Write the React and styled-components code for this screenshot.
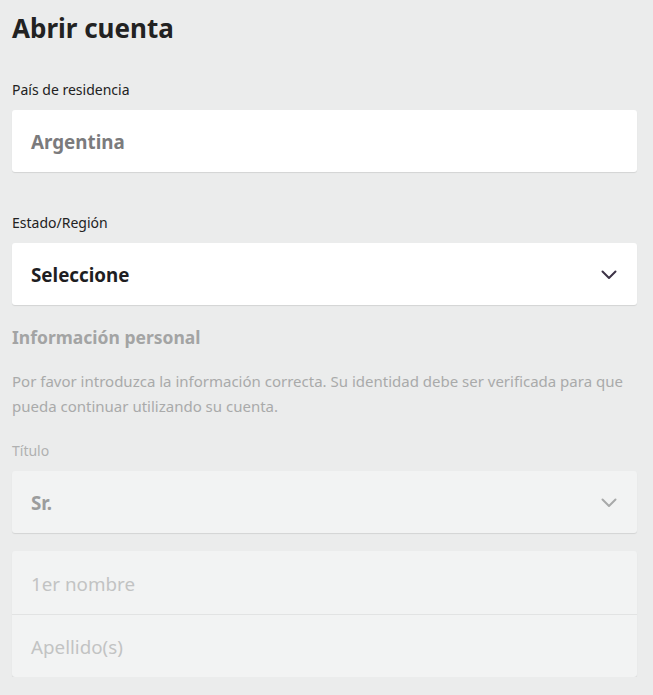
import React from "react";
import styled, { createGlobalStyle } from "styled-components";

const Global = createGlobalStyle`
  html, body { margin: 0; padding: 0; background: #ebecec; }
  body { font-family: "Noto Sans", "Open Sans", sans-serif; color: #222; }
  * { box-sizing: border-box; }
`;

const Page = styled.div`
  padding: 10px 16px 0 12px;
  display: flex;
  flex-direction: column;
`;

const Title = styled.h1`
  margin: 0;
  font-size: 26px;
  line-height: 36px;
  font-weight: 700;
  color: #222;
`;

const Field = styled.div`
  display: flex;
  flex-direction: column;
  margin-top: ${(p) => p.$mt}px;
`;

const Label = styled.div`
  font-size: 14px;
  line-height: 20px;
  color: ${(p) => (p.$muted ? "#b0b1b1" : "#222")};
  margin-bottom: 10px;
`;

const Card = styled.div`
  background: ${(p) => (p.$muted ? "#f2f3f3" : "#ffffff")};
  border-radius: 3px;
  box-shadow: 0 1px 1px rgba(0, 0, 0, 0.1);
  display: flex;
  flex-direction: column;
`;

const Row = styled.div`
  height: ${(p) => p.$h || 62}px;
  padding: 2px 20px 0 19px;
  display: flex;
  align-items: center;
  justify-content: space-between;
  & + & { border-top: 1px solid #e2e3e3; }
`;

const Value = styled.span`
  font-size: 18.8px;
  font-weight: 700;
  color: ${(p) => p.$color};
`;

const Placeholder = styled.span`
  font-size: 18.8px;
  font-weight: 400;
  color: #c2c3c3;
`;

const Section = styled.h2`
  margin: 19px 0 0;
  font-size: 17.5px;
  line-height: 26px;
  font-weight: 700;
  color: #a3a4a4;
`;

const Para = styled.p`
  margin: 19px 0 0;
  font-size: 15px;
  line-height: 25px;
  color: #a9aaaa;
`;

const Chevron = ({ color }) => (
  <svg width="16" height="10" viewBox="0 0 16 10" fill="none">
    <path d="M1.5 1.5 L8 8 L14.5 1.5" stroke={color} strokeWidth="2" strokeLinecap="round" strokeLinejoin="round" />
  </svg>
);

export default function App() {
  return (
    <>
      <Global />
      <Page>
        <Title>Abrir cuenta</Title>
        <Field $mt={34}>
          <Label>País de residencia</Label>
          <Card>
            <Row>
              <Value $color="#7b7b7d">Argentina</Value>
            </Row>
          </Card>
        </Field>
        <Field $mt={41}>
          <Label>Estado/Región</Label>
          <Card>
            <Row>
              <Value $color="#1e1e22">Seleccione</Value>
              <Chevron color="#3c3246" />
            </Row>
          </Card>
        </Field>
        <Section>Información personal</Section>
        <Para>
          Por favor introduzca la información correcta. Su identidad debe ser verificada para que
          pueda continuar utilizando su cuenta.
        </Para>
        <Field $mt={22}>
          <Label $muted>Título</Label>
          <Card $muted>
            <Row>
              <Value $color="#9c9d9d">Sr.</Value>
              <Chevron color="#a8a9a9" />
            </Row>
          </Card>
        </Field>
        <Field $mt={18}>
          <Card $muted>
            <Row $h={63}>
              <Placeholder>1er nombre</Placeholder>
            </Row>
            <Row $h={63}>
              <Placeholder>Apellido(s)</Placeholder>
            </Row>
          </Card>
        </Field>
      </Page>
    </>
  );
}
